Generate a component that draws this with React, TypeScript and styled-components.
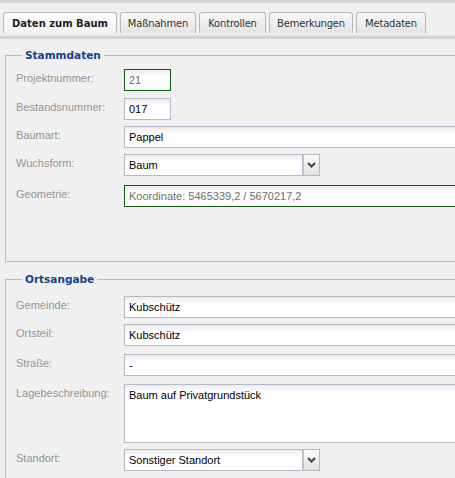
import React from "react";
import styled, { createGlobalStyle } from "styled-components";

const GlobalStyle = createGlobalStyle`
  html, body {
    margin: 0;
    padding: 0;
    background: #f0f0f0;
    overflow: hidden;
  }
`;

// colours
const borderGray = "#b5b8c8";
const legendBlue = "#15428b";
const validGreen = "#0f5c0f";
const labelGray = "#959595";

const Page = styled.div`
  width: 480px;
  background: #f0f0f0;
  border-top: 3px solid #d3d3d3;
`;

// Tab strip
const TabStrip = styled.div`
  display: flex;
  gap: 3px;
  padding: 9px 0 0 3px;
  height: 22px;
  background: #f0f0f0;
`;

const Tab = styled.div<{ $active?: boolean; $w: number }>`
  width: ${(p) => p.$w}px;
  height: 21px;
  box-sizing: border-box;
  display: flex;
  align-items: center;
  justify-content: center;
  border: 1px solid #b9b9b9;
  border-bottom: none;
  border-radius: 3px 3px 0 0;
  background: ${(p) =>
    p.$active
      ? "linear-gradient(#fdfdfd, #f2f2f2)"
      : "linear-gradient(#f8f8f8, #e4e4e4)"};
  font-family: "DejaVu Sans", Verdana, sans-serif;
  font-size: 10px;
  font-weight: ${(p) => (p.$active ? "bold" : "normal")};
  color: ${(p) => (p.$active ? "#222" : "#333")};
  letter-spacing: ${(p) => (p.$active ? "0" : "-0.2px")};
  padding-top: 1px;
`;

const TabUnderline = styled.div`
  height: 2px;
  background: #e9e9e9;
  border-bottom: 3px solid #d4d4d4;
`;

const Content = styled.div`
  padding-top: 9px;
`;

// Fieldsets
const FieldSet = styled.fieldset<{ $bottom: number }>`
  margin: 0 5px 10px 5px;
  padding: 7px 10px ${(p) => p.$bottom}px 10px;
  border: 1px solid ${borderGray};
  min-width: 0;
`;

const Legend = styled.legend`
  margin-left: 6px;
  padding: 0 3px;
  font-family: "DejaVu Sans", Verdana, sans-serif;
  font-size: 10.5px;
  font-weight: bold;
  color: ${legendBlue};
  line-height: 14px;
`;

const Row = styled.div<{ $gap: number }>`
  display: flex;
  align-items: flex-start;
  margin-top: ${(p) => p.$gap}px;
`;

const Label = styled.label`
  width: 108px;
  flex: none;
  padding-top: 3px;
  font-family: "Liberation Sans", Arial, sans-serif;
  font-size: 11px;
  color: ${labelGray};
`;

const Field = styled.div<{ $w?: number; $valid?: boolean; $h?: number }>`
  box-sizing: border-box;
  ${(p) => (p.$w ? `width: ${p.$w}px; flex: none;` : "flex: 1;")}
  height: ${(p) => p.$h ?? 22}px;
  border: 1px solid ${(p) => (p.$valid ? validGreen : borderGray)};
  background: linear-gradient(#ececec, #ffffff 7px);
  padding: ${(p) => (p.$h ? "4px 4px" : "0 4px")};
  display: flex;
  align-items: ${(p) => (p.$h ? "flex-start" : "center")};
  font-family: "Liberation Sans", Arial, sans-serif;
  font-size: 11px;
  color: ${(p) => (p.$valid ? "#6e6e6e" : "#000")};
  white-space: nowrap;
  overflow: hidden;
`;

const Combo = styled.div`
  display: flex;
  width: 196px;
  flex: none;
`;

const Trigger = styled.div`
  width: 17px;
  height: 22px;
  box-sizing: border-box;
  border: 1px solid ${borderGray};
  border-left: 1px solid #c3c5d0;
  background: linear-gradient(#fbfbfb, #e2e2e2);
  display: flex;
  align-items: center;
  justify-content: center;
`;

const Chevron = () => (
  <svg width="9" height="6" viewBox="0 0 9 6">
    <path d="M1 1 L4.5 4.5 L8 1" fill="none" stroke="#4a4a4a" strokeWidth="2.2" />
  </svg>
);

const Select: React.FC<{ value: string }> = ({ value }) => (
  <Combo>
    <Field>{value}</Field>
    <Trigger>
      <Chevron />
    </Trigger>
  </Combo>
);

const tabs = [
  { label: "Daten zum Baum", w: 114, active: true },
  { label: "Maßnahmen", w: 76 },
  { label: "Kontrollen", w: 67 },
  { label: "Bemerkungen", w: 84 },
  { label: "Metadaten", w: 70 },
];

const App: React.FC = () => {
  return (
    <Page>
      <GlobalStyle />
      <TabStrip>
        {tabs.map((t) => (
          <Tab key={t.label} $w={t.w} $active={t.active}>
            {t.label}
          </Tab>
        ))}
      </TabStrip>
      <TabUnderline />
      <Content>
        <FieldSet $bottom={54}>
          <Legend>Stammdaten</Legend>
          <Row $gap={0}>
            <Label>Projektnummer:</Label>
            <Field $w={47} $valid>
              21
            </Field>
          </Row>
          <Row $gap={7}>
            <Label>Bestandsnummer:</Label>
            <Field $w={47}>017</Field>
          </Row>
          <Row $gap={6}>
            <Label>Baumart:</Label>
            <Field>Pappel</Field>
          </Row>
          <Row $gap={6}>
            <Label>Wuchsform:</Label>
            <Select value="Baum" />
          </Row>
          <Row $gap={9}>
            <Label>Geometrie:</Label>
            <Field $valid>Koordinate: 5465339,2 / 5670217,2</Field>
          </Row>
        </FieldSet>

        <FieldSet $bottom={10}>
          <Legend>Ortsangabe</Legend>
          <Row $gap={3}>
            <Label>Gemeinde:</Label>
            <Field>Kubschütz</Field>
          </Row>
          <Row $gap={6}>
            <Label>Ortsteil:</Label>
            <Field>Kubschütz</Field>
          </Row>
          <Row $gap={8}>
            <Label>Straße:</Label>
            <Field>-</Field>
          </Row>
          <Row $gap={8}>
            <Label>Lagebeschreibung:</Label>
            <Field $h={59}>Baum auf Privatgrundstück</Field>
          </Row>
          <Row $gap={6}>
            <Label>Standort:</Label>
            <Select value="Sonstiger Standort" />
          </Row>
        </FieldSet>
      </Content>
    </Page>
  );
};

export default App;
